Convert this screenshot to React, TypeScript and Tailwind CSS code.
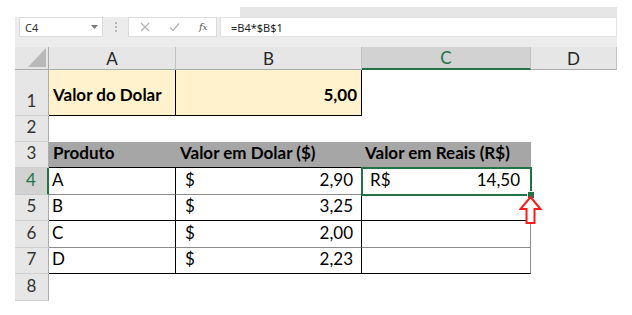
import React from 'react';

const rows = [
    { n: 4, produto: 'A', dolar: '2,90', line: 'border-b-[#8c8c8c]' },
    { n: 5, produto: 'B', dolar: '3,25', line: 'border-b-black' },
    { n: 6, produto: 'C', dolar: '2,00', line: 'border-b-[#8c8c8c]' },
    { n: 7, produto: 'D', dolar: '2,23', line: 'border-b-black' },
];

function ColHead({ label, active }: { label: string; active?: boolean }) {
    return (
        <div
            className={
                active
                    ? 'flex items-center justify-center bg-[#d2d2d2] border-r border-r-[#c2c2c2] border-b-2 border-b-[#217346] text-[#217346]'
                    : 'flex items-center justify-center bg-[#e6e6e6] border-r border-r-[#c2c2c2] border-b border-b-[#ababab] text-[#262626]'
            }
        >
            {label}
        </div>
    );
}

function RowHead({ n, active }: { n: number; active?: boolean }) {
    return (
        <div
            className={
                active
                    ? 'flex items-end justify-center pb-[6px] bg-[#d2d2d2] border-r-2 border-r-[#217346] border-b border-b-[#c8c8c8] text-[#217346]'
                    : 'flex items-end justify-center pb-[6px] bg-[#e6e6e6] border-r border-r-[#ababab] border-b border-b-[#cfcfcf] text-[#333]'
            }
        >
            {n}
        </div>
    );
}

export default function App() {
    return (
        <div className="relative w-[632px] h-[315px] bg-white overflow-hidden font-['Lato',sans-serif] text-[17px] leading-none text-black">
            <div className="ml-[15px] w-[602px]">
                {/* ribbon edge */}
                <div className="h-[17px] flex pt-[7px]">
                    <div className="ml-[225px] flex-1 bg-[#e6e6e6]" />
                </div>

                {/* formula bar */}
                <div className="h-[20px] bg-[#ececec] flex font-['Noto_Sans',sans-serif] text-[11px] text-[#333]">
                    <div className="ml-[4px] w-[84px] bg-white border border-[#dcdcdc] flex items-center justify-between pl-[5px] pr-[4px]">
                        <span>C4</span>
                        <svg width="7" height="4" viewBox="0 0 7 4">
                            <path d="M0 0h7L3.5 4z" fill="#7a7a7a" />
                        </svg>
                    </div>
                    <div className="w-[25px] flex flex-col items-center justify-center gap-[2px]">
                        <span className="w-[2px] h-[2px] bg-[#b5b5b5]" />
                        <span className="w-[2px] h-[2px] bg-[#b5b5b5]" />
                        <span className="w-[2px] h-[2px] bg-[#b5b5b5]" />
                    </div>
                    <div className="w-[89px] bg-white border border-[#dcdcdc] flex items-center">
                        <svg className="ml-[11px]" width="10" height="10" viewBox="0 0 10 10">
                            <path d="M1 1l8 8M9 1l-8 8" stroke="#b3b3b3" strokeWidth="1.2" />
                        </svg>
                        <svg className="ml-[19px]" width="11" height="10" viewBox="0 0 11 10">
                            <path d="M1 5.5l3 3L10 1.5" stroke="#b3b3b3" strokeWidth="1.2" fill="none" />
                        </svg>
                        <span className="ml-[19px] font-['DejaVu_Serif',serif] italic text-[10px] text-[#555]">
                            f<span className="text-[8px]">x</span>
                        </span>
                    </div>
                    <div className="ml-[3px] flex-1 bg-white border border-[#e2e2e2] flex items-center pl-[10px] text-[#222]">
                        =B4*$B$1
                    </div>
                </div>
                <div className="h-[10px] bg-[#ececec]" />

                {/* sheet */}
                <div className="grid grid-cols-[34px_127px_186px_169px_86px] grid-rows-[23px_46px_26px_26px_27px_26px_27px_26px_27px]">
                    <div className="relative bg-[#e6e6e6] border-r border-r-[#ababab] border-b border-b-[#ababab]">
                        <svg className="absolute right-[2px] bottom-[2px]" width="18" height="19" viewBox="0 0 18 19">
                            <path d="M18 0v19H0z" fill="#b9b9b9" />
                        </svg>
                    </div>
                    <ColHead label="A" />
                    <ColHead label="B" />
                    <ColHead label="C" active />
                    <ColHead label="D" />

                    {/* row 1 */}
                    <RowHead n={1} />
                    <div className="bg-[#fff2cc] border-r border-b border-black flex items-end pb-[12px] pl-[4px] font-bold">
                        Valor do Dolar
                    </div>
                    <div className="bg-[#fff2cc] border-r border-b border-black flex items-end justify-end pb-[12px] pr-[4px] font-bold">
                        5,00
                    </div>
                    <div />
                    <div />

                    {/* row 2 */}
                    <RowHead n={2} />
                    <div />
                    <div />
                    <div />
                    <div />

                    {/* row 3 */}
                    <RowHead n={3} />
                    <div className="bg-[#a6a6a6] border-b border-black flex items-end pb-[6px] pl-[4px] font-bold">Produto</div>
                    <div className="bg-[#a6a6a6] border-b border-black flex items-end pb-[6px] pl-[4px] font-bold">Valor em Dolar ($)</div>
                    <div className="bg-[#a6a6a6] border-b border-black flex items-end pb-[6px] pl-[3px] font-bold">Valor em Reais (R$)</div>
                    <div />

                    {rows.map((r) => (
                        <React.Fragment key={r.n}>
                            <RowHead n={r.n} active={r.n === 4} />
                            <div className={`border-r border-r-black border-b ${r.line} flex items-end pb-[6px] pl-[3px]`}>
                                {r.produto}
                            </div>
                            <div className={`border-r border-r-black border-b ${r.line} flex items-end justify-between pb-[6px] pl-[9px] pr-[8px]`}>
                                <span>$</span>
                                <span>{r.dolar}</span>
                            </div>
                            <div className={`border-r border-r-[#8c8c8c] border-b ${r.line} flex items-end justify-between pb-[6px] pl-[8px] pr-[10px]`}>
                                {r.n === 4 && (
                                    <>
                                        <span>R$</span>
                                        <span>14,50</span>
                                    </>
                                )}
                            </div>
                            <div />
                        </React.Fragment>
                    ))}

                    {/* row 8 */}
                    <RowHead n={8} />
                    <div />
                    <div />
                    <div />
                    <div />
                </div>
            </div>

            {/* active cell C4 */}
            <div className="absolute left-[361px] top-[167px] w-[171px] h-[29px] border-2 border-[#217346]" />
            <div className="absolute left-[528px] top-[192px] w-[6px] h-[6px] bg-[#217346] outline outline-1 outline-white" />

            {/* red arrow */}
            <svg className="absolute left-[519px] top-[195px]" width="24" height="31" viewBox="0 0 24 31">
                <path d="M11.5 2L21.5 14H15.5V28H7.5V14H1.5Z" fill="white" stroke="#ff1a1a" strokeWidth="2" strokeLinejoin="miter" />
            </svg>
        </div>
    );
}
